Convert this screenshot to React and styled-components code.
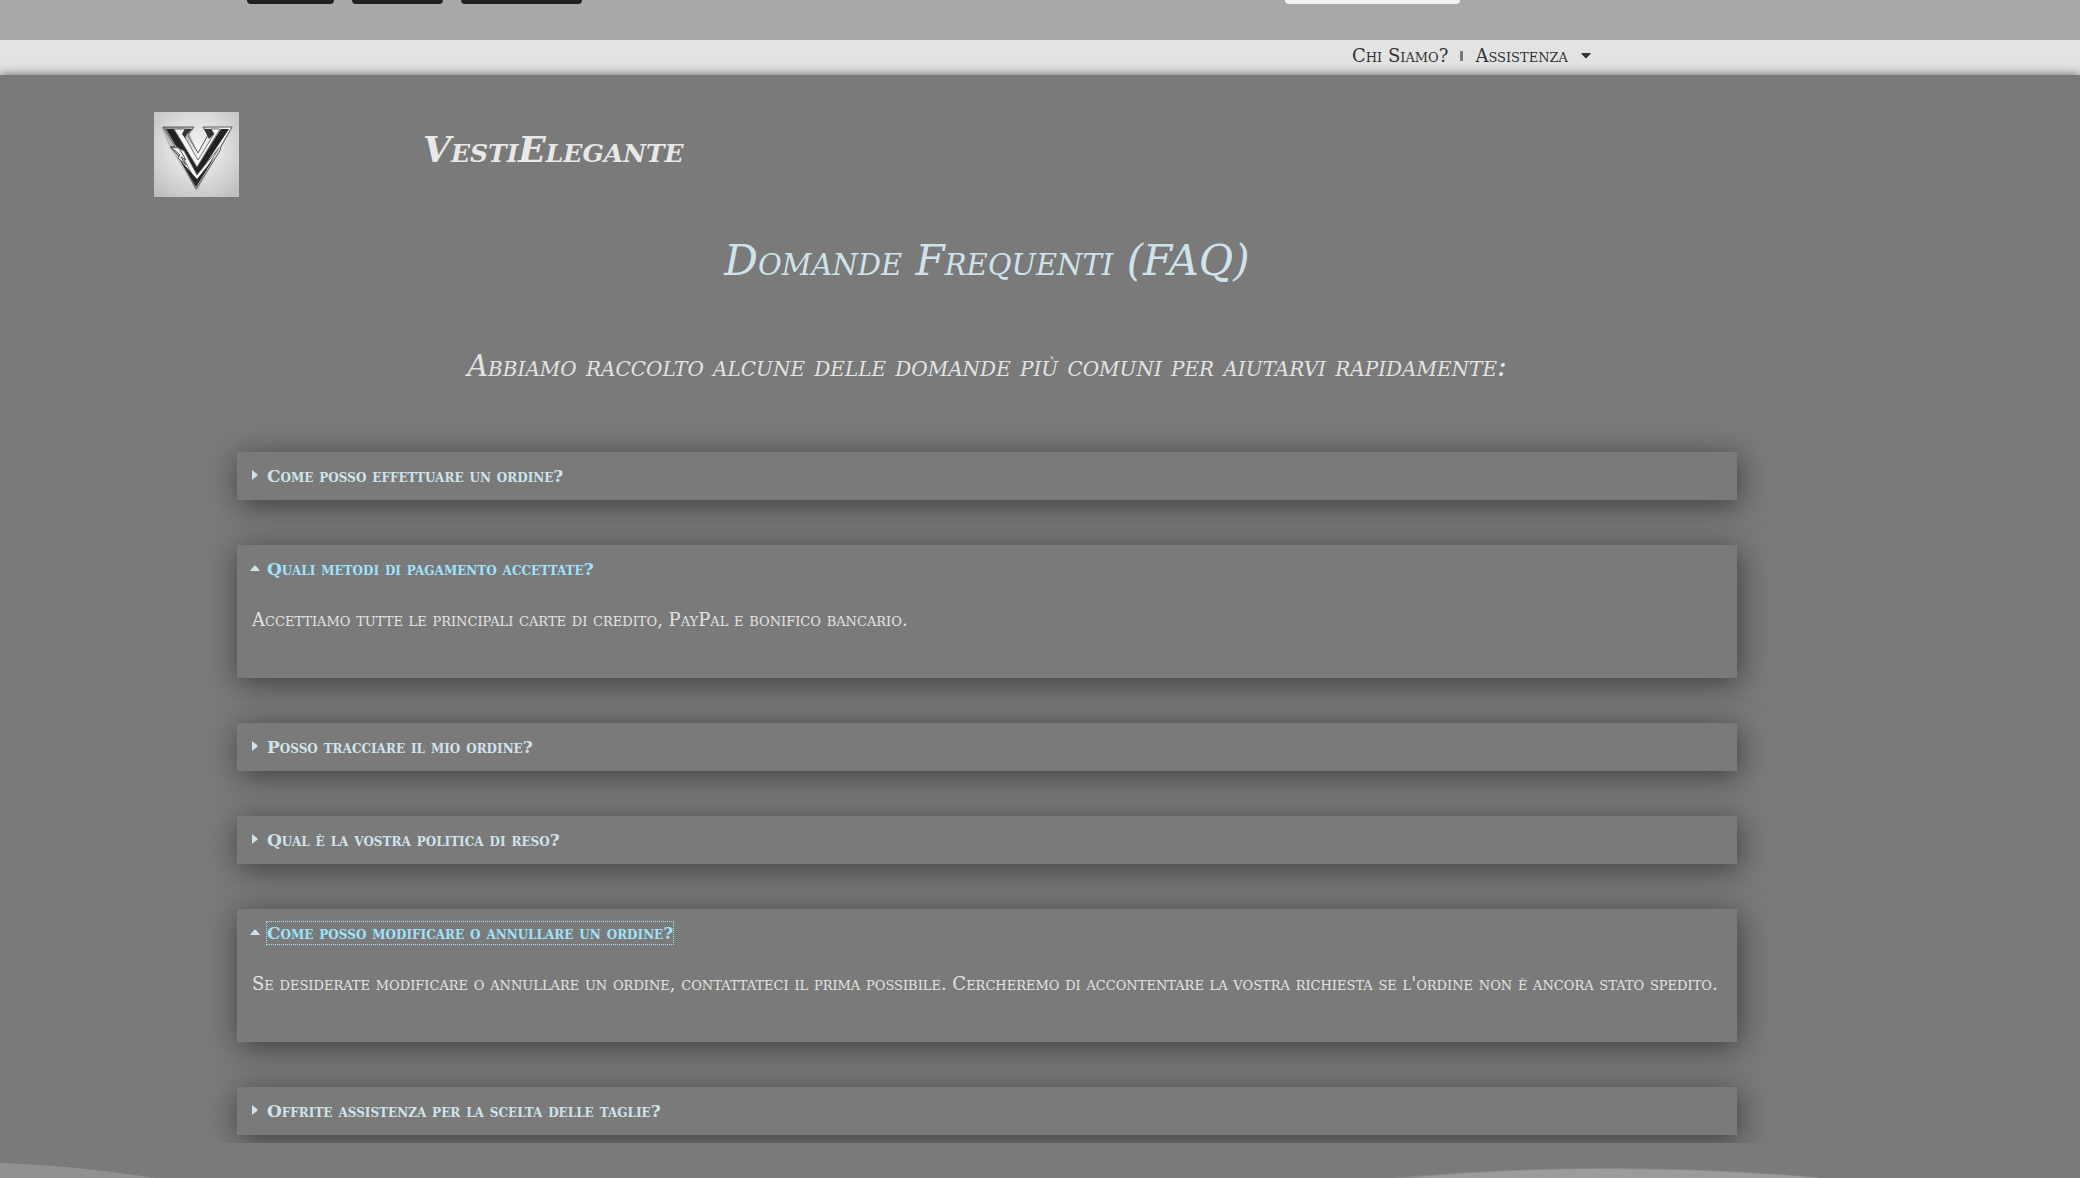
import React, { useState } from "react";
import styled, { createGlobalStyle } from "styled-components";

const GlobalStyle = createGlobalStyle`
  *, *::before, *::after { box-sizing: border-box; }
  body {
    margin: 0;
    background: #7a7a7a;
    color: #e3e3e3;
    font-family: "DejaVu Serif", "Liberation Serif", serif;
    font-variant-caps: small-caps;
    overflow-x: hidden;
  }
  h1, h2, h3, p { margin: 0; }
`;

const TopStrip = styled.div`
  display: flex;
  align-items: flex-start;
  height: 40px;
  padding: 0 620px 0 247px;
  background: #a8a8a8;
`;

const TabGroup = styled.div`
  display: flex;
  gap: 18px;
  flex: 1;
`;

const TabEdge = styled.span`
  width: ${(p) => p.$width}px;
  height: 4px;
  border-radius: 0 0 4px 4px;
  background: ${(p) => (p.$light ? "#f1f2f3" : "#1f1f1f")};
`;

const Nav = styled.nav`
  display: flex;
  justify-content: flex-end;
  align-items: center;
  height: 35px;
  padding: 0 489px 3px 0;
  background: #e3e3e3;
`;

const NavLink = styled.a`
  display: flex;
  align-items: center;
  gap: 13px;
  color: #333;
  font-size: 18px;
  line-height: 24px;
  text-decoration: none;
`;

const NavDivider = styled.span`
  width: 3px;
  height: 10px;
  margin: 0 12px;
  background: #7a7a7a;
`;

const Page = styled.div`
  background: #7a7a7a;
  box-shadow: 0 0 10px rgba(0, 0, 0, 0.6);
`;

const Brand = styled.header`
  display: flex;
  align-items: flex-start;
  padding: 37px 154px 0;
`;

const Logo = styled.svg`
  display: block;
  width: 85px;
  height: 85px;
`;

const BrandName = styled.h2`
  margin-left: 184px;
  padding-top: 16px;
  font-size: 36px;
  line-height: 42px;
  font-style: italic;
  font-weight: 700;
  color: #e8e8e8;
`;

const Faq = styled.main`
  display: flex;
  flex-direction: column;
  align-items: center;
  padding: 36px 106px 8px 0;
  overflow: hidden;
`;

const Heading = styled.h1`
  font-size: 42px;
  line-height: 56px;
  font-style: italic;
  font-weight: 400;
  color: #cfe3ec;
`;

const Lead = styled.p`
  margin-top: 59px;
  font-size: 29px;
  line-height: 36px;
  font-style: italic;
  color: #e3e3e3;
`;

const List = styled.div`
  display: flex;
  flex-direction: column;
  gap: 45px;
  width: 100%;
  max-width: 1500px;
  margin-top: 68px;
`;

const Card = styled.section`
  background: #7a7a7a;
  box-shadow: 2px 5px 30px rgba(0, 0, 0, 0.5);
`;

const Question = styled.button`
  display: flex;
  align-items: center;
  width: 100%;
  height: 48px;
  padding: 0 15px;
  border: 0;
  background: none;
  color: ${(p) => (p.$open ? "#9fe3fb" : "#cfe3ec")};
  font: inherit;
  font-variant-caps: small-caps;
  font-size: 17px;
  font-weight: 700;
  text-align: left;
  cursor: pointer;
  outline: none;
`;

const QuestionText = styled.span`
  line-height: 22px;
  outline: ${(p) => (p.$focused ? "1px dotted #9fe3fb" : "none")};
`;

const Marker = styled.svg`
  width: 10px;
  height: 12px;
  margin: 0 7px 0 -2px;
  fill: #cfe3ec;
`;

const Answer = styled.p`
  padding: 15px 15px 46px;
  font-size: 18px;
  line-height: 24px;
  color: #e3e3e3;
`;

const Waves = styled.svg`
  display: block;
  width: 100%;
  height: 35px;
`;

const items = [
  { q: "Come posso effettuare un ordine?" },
  {
    q: "Quali metodi di pagamento accettate?",
    a: "Accettiamo tutte le principali carte di credito, PayPal e bonifico bancario.",
  },
  { q: "Posso tracciare il mio ordine?" },
  { q: "Qual è la vostra politica di reso?" },
  {
    q: "Come posso modificare o annullare un ordine?",
    a: "Se desiderate modificare o annullare un ordine, contattateci il prima possibile. Cercheremo di accontentare la vostra richiesta se l'ordine non è ancora stato spedito.",
  },
  { q: "Offrite assistenza per la scelta delle taglie?" },
];

function BrandLogo() {
  return (
    <Logo viewBox="0 0 85 85" role="img" aria-label="VestiElegante">
      <defs>
        <radialGradient id="plate" cx="50%" cy="42%" r="70%">
          <stop offset="0" stopColor="#f4f4f3" />
          <stop offset="0.5" stopColor="#dededc" />
          <stop offset="1" stopColor="#bfc0be" />
        </radialGradient>
        <linearGradient id="steel" x1="0" y1="0" x2="1" y2="1">
          <stop offset="0" stopColor="#8c8c8c" />
          <stop offset="0.5" stopColor="#fafafa" />
          <stop offset="1" stopColor="#777" />
        </linearGradient>
      </defs>
      <rect width="85" height="85" fill="url(#plate)" />
      <path d="M7 15H41L36 22L44 41L54 22L48 15H79L43 79L16 36Z" fill="#777" opacity="0.35" />
      <path d="M9 15H40L35 21L34 24L44 41L54 23L49 15H78L66 36L67 37L42 77L24 43L16 35L21 34Z" fill="url(#steel)" stroke="#5c5c5c" strokeWidth="1" />
      <path d="M12 17H21L43 54L67 17H75L43 65L29 40L22 34Z" fill="#222" />
      <path d="M20 17H31L29 22L44 48L60 22L57 17H66L43 55Z" fill="#f7f7f7" stroke="#777" strokeWidth="1" />
      <path d="M31 17H38L33 22L31 26L28 22ZM50 17H57L60 22L55 27Z" fill="#333" />
      <path d="M24 36L30 39L43 63L65 36L43 72Z" fill="#fff" stroke="#777" strokeWidth="1" />
      <path d="M26 48L42 75L60 46L43 67Z" fill="#262626" />
      <path d="M17 35L25 36L32 48L27 45L32 53L24 46L26 43Z" fill="#eee" stroke="#555" strokeWidth="1" />
    </Logo>
  );
}

export default function App() {
  const [open, setOpen] = useState({ 1: true, 4: true });
  const [focused, setFocused] = useState(4);

  const toggle = (i) => {
    setOpen((prev) => ({ ...prev, [i]: !prev[i] }));
    setFocused(i);
  };

  return (
    <>
      <GlobalStyle />
      <TopStrip>
        <TabGroup>
          <TabEdge $width={87} />
          <TabEdge $width={91} />
          <TabEdge $width={121} />
        </TabGroup>
        <TabEdge $width={175} $light />
      </TopStrip>
      <Nav>
        <NavLink href="#chi-siamo">Chi Siamo?</NavLink>
        <NavDivider />
        <NavLink href="#assistenza">
          Assistenza
          <svg width="10" height="6" viewBox="0 0 10 6" fill="#333">
            <path d="M1 0H9Q10 0 9.500 1L5.600 5Q5 5.600 4.400 5L0.500 1Q0 0 1 0Z" />
          </svg>
        </NavLink>
      </Nav>
      <Page>
        <Brand>
          <BrandLogo />
          <BrandName>VestiElegante</BrandName>
        </Brand>
        <Faq>
          <Heading>Domande Frequenti (FAQ)</Heading>
          <Lead>Abbiamo raccolto alcune delle domande più comuni per aiutarvi rapidamente:</Lead>
          <List>
            {items.map((item, i) => (
              <Card key={item.q}>
                <Question type="button" $open={!!open[i]} aria-expanded={!!open[i]} onClick={() => toggle(i)}>
                  <Marker viewBox="0 0 10 12" aria-hidden="true">
                    {open[i] ? <path d="M0 8L4 3Q5 2 6 3L10 8Z" /> : <path d="M2 0L7 4Q8 5 7 6L2 10Z" />}
                  </Marker>
                  <QuestionText $focused={focused === i}>{item.q}</QuestionText>
                </Question>
                {open[i] && item.a && <Answer>{item.a}</Answer>}
              </Card>
            ))}
          </List>
        </Faq>
        <Waves viewBox="0 0 2080 35" preserveAspectRatio="none" aria-hidden="true">
          <path d="M0 20Q70 22 155 35H0Z" fill="#919191" />
          <path d="M1390 35Q1500 25 1610 25Q1710 25 1826 35Z" fill="#8b8b8b" />
          <path d="M1410 35Q1500 26 1610 26Q1710 26 1820 35Z" fill="#9c9c9c" />
        </Waves>
      </Page>
    </>
  );
}
